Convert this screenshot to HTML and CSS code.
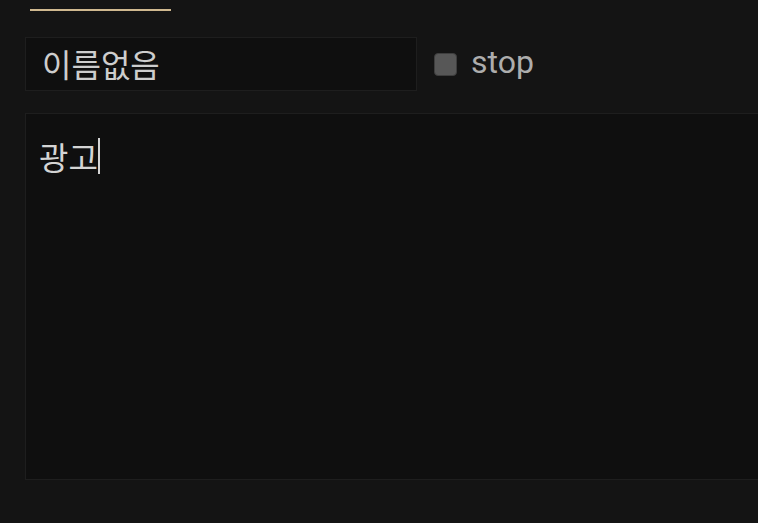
FILE: index.html
```html
<!DOCTYPE html>
<html lang="ko">
<head>
<meta charset="utf-8">
<title>메모</title>
<link rel="stylesheet" href="styles.css">
</head>
<body>
<div class="page">
  <div class="tab-indicator"></div>
  <div class="row">
    <div class="name-input">이름없음</div>
    <label class="stop">
      <span class="check"></span>
      <span class="stop-label">stop</span>
    </label>
  </div>
  <div class="editor"><span class="text">광고</span><span class="caret"></span></div>
</div>
</body>
</html>
```
FILE: styles.css
```css
html, body {
  margin: 0;
  padding: 0;
  background: #141414;
  overflow: hidden;
  height: 100%;
}
body {
  font-family: Roboto, "Noto Sans CJK KR", sans-serif;
  color: #cfcfcf;
}
.page {
  padding-left: 25px;
}
.tab-indicator {
  margin: 9px 0 0 5px;
  width: 141px;
  height: 2px;
  background: #cfb88f;
}
.row {
  display: flex;
  align-items: center;
  margin-top: 26px;
}
.name-input {
  box-sizing: border-box;
  width: 392px;
  height: 54px;
  border: 1px solid #1e1e1e;
  background: #0f0f0f;
  padding-left: 16px;
  font-family: "Noto Sans CJK KR", sans-serif;
  font-size: 32px;
  line-height: 50px;
  color: #cdcdcd;
}
.stop {
  display: flex;
  align-items: center;
  margin-left: 17px;
}
.check {
  box-sizing: border-box;
  width: 23px;
  height: 23px;
  border-radius: 4px;
  background: #575757;
  border: 1px solid #3e3e3e;
}
.stop-label {
  margin-left: 14px;
  font-size: 32px;
  color: #adadad;
  line-height: 40px;
  margin-top: -4px;
}
.editor {
  box-sizing: border-box;
  margin-top: 22px;
  height: 367px;
  margin-right: -20px;
  border: 1px solid #1e1e1e;
  background: #0f0f0f;
  padding: 19px 0 0 13px;
  font-family: "Noto Sans CJK KR", sans-serif;
  font-size: 32px;
  line-height: 46px;
  color: #d4d4d4;
  display: flex;
  align-items: flex-start;
}
.caret {
  display: inline-block;
  width: 2px;
  height: 36px;
  margin-top: 5px;
  margin-left: 0;
  background: #d4d4d4;
}
```
